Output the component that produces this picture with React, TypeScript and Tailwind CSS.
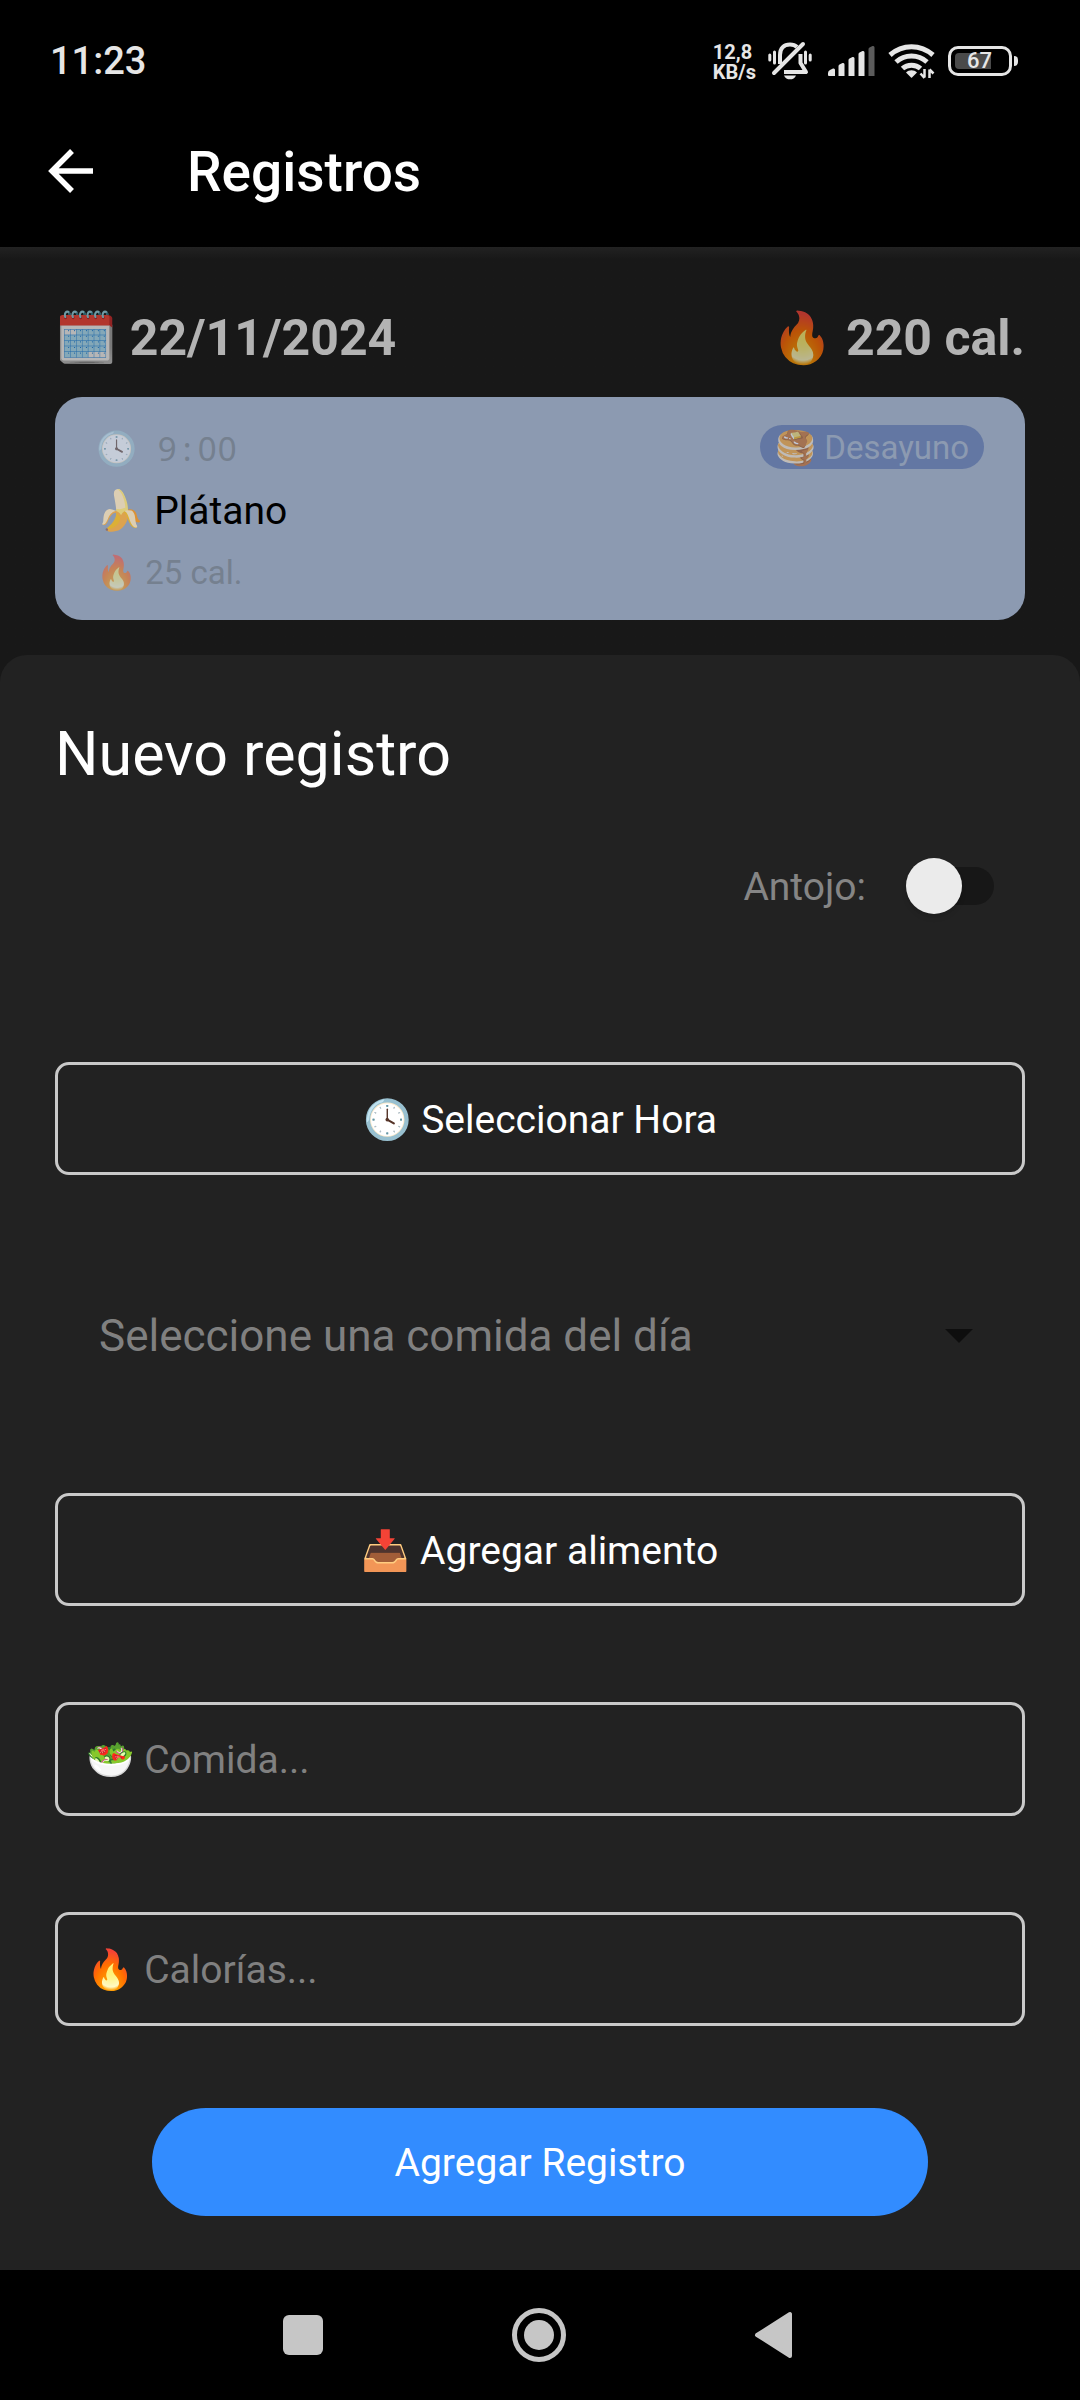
import type { ReactNode } from 'react';

const FONT = 'font-[Roboto,"Noto_Color_Emoji",sans-serif]';

function BellOffIcon() {
  return (
    <svg className="mr-1 h-10 w-11" viewBox="0 0 44 40" fill="none" stroke="#e6e6e6" strokeWidth="4" strokeLinecap="round" strokeLinejoin="round" aria-hidden="true">
      <path d="M12 23V14C12 7 16 3.500 22 3.500c3 0 5 .5 7 2.500" strokeLinecap="butt" />
      <path d="M32.500 13v9l5.500 9H16" strokeLinecap="butt" />
      <path d="M35 3 6 32" />
      <path d="M1.800 14v5M6.500 11v11M37.500 11v11M42.200 14v5" strokeWidth="3" />
      <path d="M16 34.500h12c-1 3-3.500 3.800-6 3.800s-5-.8-6-3.800z" fill="#e6e6e6" stroke="none" />
    </svg>
  );
}

function SignalIcon() {
  return (
    <svg className="h-8 w-12" viewBox="0 0 48 32" fill="#e6e6e6" aria-hidden="true">
      <path d="M0 30v-2q0-2 2-3l3-1.500q2-.5 2 1.500V31H1q-1 0-1-1z" />
      <path d="M10.500 31V21q0-1 1-1.500l3-1.500q2-.5 2 1.500V31z" />
      <path d="M20.500 31V15q0-1 1-1.500l3-1.500q2-.5 2 1.500V31z" />
      <path d="M30.500 31V9q0-1 1-1.500l3-1.500q2-.5 2 1.500V31z" />
      <path d="M40.500 31V4q0-1 1-1.500l3-1.500q2-.5 2 1.500V31z" fill="#5c5c5c" />
    </svg>
  );
}

function WifiIcon() {
  return (
    <svg className="h-9 w-12" viewBox="0 0 48 36" aria-hidden="true">
      <g fill="none" stroke="#e6e6e6" strokeWidth="5">
        <path d="M2 12C14.500 1 32.500 1 45 12" />
        <path d="M8 19C17 11 30 11 39 19" />
        <path d="M14.500 25.500c5-4.500 13-4.500 18 0" />
      </g>
      <path d="M18 29.500c3-3 8-3 11 0L24 34.500q-.5.500-1 0z" fill="#e6e6e6" />
      <path d="M36.500 26v8.500M36.500 35l-4-4.500M41.500 35v-8.500M41.500 26.500l4 4" stroke="#e6e6e6" strokeWidth="2.500" fill="none" />
    </svg>
  );
}

function Battery() {
  return (
    <div className="flex items-center gap-0.5">
      <div className="flex h-[30px] w-16 items-center rounded-[10px] border-3 border-[#e6e6e6] p-1">
        <div className="flex h-full w-9 items-center rounded-l-sm bg-[#4a4a4a]">
          <span className="ml-3 text-[22px] leading-[22px] font-medium text-[#e6e6e6]">67</span>
        </div>
      </div>
      <div className="h-2.5 w-1 rounded-r bg-[#e6e6e6]" />
    </div>
  );
}

function OutlineButton({ children }: { children: ReactNode }) {
  return (
    <button type="button" className="h-[113px] w-full rounded-[14px] border-3 border-[#c9c9c9] pt-0.5 text-[39px] leading-[46px] text-white">
      {children}
    </button>
  );
}

function OutlineInput({ label, placeholder }: { label: string; placeholder: string }) {
  return (
    <input
      type="text"
      aria-label={label}
      placeholder={placeholder}
      className="h-[114px] w-full rounded-[14px] border-3 border-[#c9c9c9] bg-transparent px-7 pt-0.5 text-[39px] text-white placeholder:text-[#808080] placeholder:opacity-100"
    />
  );
}

export default function App() {
  return (
    <div className={`flex min-h-screen flex-col bg-[#181818] ${FONT}`}>
      <header className="bg-black">
        <div className="flex h-[122px] items-center justify-between pr-[62px] pl-[50px] text-[#e6e6e6]">
          <span className="text-[38px] font-medium">11:23</span>
          <div className="flex items-center gap-3">
            <div className="pt-0.5 text-[20px] leading-5 font-bold">
              12,8
              <br />
              KB/s
            </div>
            <BellOffIcon />
            <SignalIcon />
            <WifiIcon />
            <Battery />
          </div>
        </div>
        <div className="flex h-[125px] items-center pb-6 pl-[44px]">
          <button type="button" aria-label="Volver" className="mr-[89px] pb-1">
            <svg className="size-[54px]" viewBox="0 0 54 54" fill="none" stroke="#fff" strokeWidth="5.500" aria-hidden="true">
              <path d="M49 27H9M28 7 8 27l20 20" />
            </svg>
          </button>
          <h1 className="text-[55px] font-medium text-white">Registros</h1>
        </div>
      </header>

      <main className="h-[408px] bg-linear-to-b from-[#222222] to-[#181818] to-3% px-[55px] pt-[59px]">
        <div className="flex justify-between text-[50px] leading-[64px] font-bold text-[#b3b3b3]">
          <h2><span className="opacity-70">🗓️</span> 22/11/2024</h2>
          <p><span className="opacity-70">🔥</span> 220 cal.</p>
        </div>
        <article className="mt-[27px] flex h-[223px] justify-between rounded-[27px] bg-[#8c9ab1] pt-7 pr-[41px] pl-[41px]">
          <div className="pt-0.5">
            <div className="flex h-11 items-center text-[33px] text-[#75808f]">
              <span className="opacity-50">🕓</span>
              <time className="ml-5 flex font-['Noto_Sans']">
                <span className="w-5 text-center">9</span>
                <span className="w-5 text-center">:</span>
                <span className="w-5 text-center">0</span>
                <span className="w-5 text-center">0</span>
              </time>
            </div>
            <h3 className="mt-4 text-[39px] leading-[48px] text-black"><span className="opacity-70">🍌</span> Plátano</h3>
            <p className="mt-4 text-[33px] leading-[44px] text-[#75808f]"><span className="opacity-50">🔥</span> 25 cal.</p>
          </div>
          <span className="h-11 rounded-full bg-[#6377a3] px-[15px] text-[33px] leading-[46px] text-[#8c9ab1]">
            <span className="opacity-60">🥞</span> Desayuno
          </span>
        </article>
      </main>

      <section className="flex flex-1 flex-col rounded-t-[27px] bg-[#222222] px-[55px] pt-16">
        <h2 className="text-[61px] leading-[70px] text-white">Nuevo registro</h2>
        <label className="mt-[69px] flex h-14 items-center justify-end gap-10 pr-[31px] text-[39px] text-[#858585]">
          <span className="pt-0.5">Antojo:</span>
          <span className="relative flex h-14 w-[88px] items-center">
            <input type="checkbox" role="switch" className="peer sr-only" />
            <span className="ml-2 h-[38px] w-20 rounded-full bg-[#171717]" />
            <span className="absolute left-0 size-14 rounded-full bg-[#ebebeb] shadow-md peer-checked:left-8" />
          </span>
        </label>
        <div className="mt-[148px]">
          <OutlineButton>🕓 Seleccionar Hora</OutlineButton>
        </div>
        <div className="relative mt-[105px] flex h-28 items-center">
          <select aria-label="Comida del día" className="h-full w-full appearance-none bg-transparent pl-[44px] text-[44px] text-[#808080]">
            <option>Seleccione una comida del día</option>
            <option>Desayuno</option>
            <option>Almuerzo</option>
            <option>Cena</option>
          </select>
          <svg className="pointer-events-none absolute right-[52px] h-3.5 w-7" viewBox="0 0 28 14" fill="#0e0e0e" aria-hidden="true">
            <path d="M0 0h28L14 14z" />
          </svg>
        </div>
        <div className="mt-[101px] flex flex-col gap-24">
          <OutlineButton>📥 Agregar alimento</OutlineButton>
          <OutlineInput label="Comida" placeholder="🥗 Comida..." />
          <OutlineInput label="Calorías" placeholder="🔥 Calorías..." />
        </div>
        <button type="button" className="mx-auto mt-[82px] mb-[54px] h-[108px] w-4/5 rounded-full bg-[#328cff] pt-0.5 text-[39px] text-white">
          Agregar Registro
        </button>
      </section>

      <nav className="flex h-[130px] items-center justify-center gap-[180px] bg-black pr-0.5">
        <button type="button" aria-label="Recientes">
          <svg className="size-14" viewBox="0 0 56 56" fill="#c6c6c6" aria-hidden="true"><rect x="8" y="8" width="40" height="40" rx="6" /></svg>
        </button>
        <button type="button" aria-label="Inicio">
          <svg className="size-14" viewBox="0 0 56 56" aria-hidden="true">
            <circle cx="28" cy="28" r="24.500" fill="none" stroke="#c6c6c6" strokeWidth="5" />
            <circle cx="28" cy="28" r="15" fill="#c6c6c6" />
          </svg>
        </button>
        <button type="button" aria-label="Atrás">
          <svg className="size-14" viewBox="0 0 56 56" fill="#c6c6c6" stroke="#c6c6c6" strokeWidth="4" strokeLinejoin="round" aria-hidden="true"><path d="M43 7v42L10 28z" /></svg>
        </button>
      </nav>
    </div>
  );
}
